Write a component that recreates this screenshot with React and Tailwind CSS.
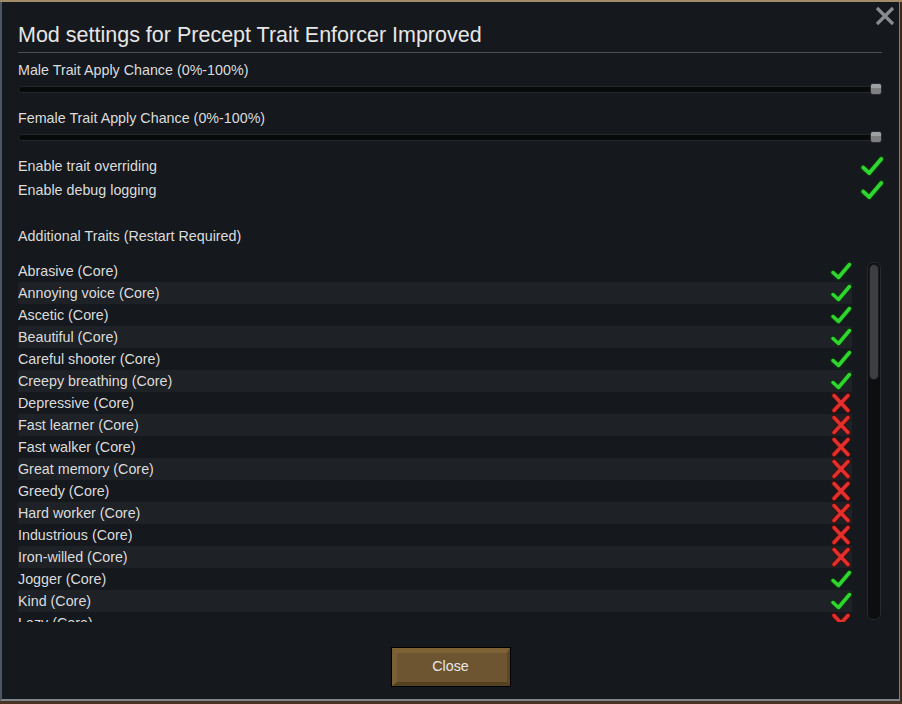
const traits = [
  ["Abrasive (Core)", true],
  ["Annoying voice (Core)", true],
  ["Ascetic (Core)", true],
  ["Beautiful (Core)", true],
  ["Careful shooter (Core)", true],
  ["Creepy breathing (Core)", true],
  ["Depressive (Core)", false],
  ["Fast learner (Core)", false],
  ["Fast walker (Core)", false],
  ["Great memory (Core)", false],
  ["Greedy (Core)", false],
  ["Hard worker (Core)", false],
  ["Industrious (Core)", false],
  ["Iron-willed (Core)", false],
  ["Jogger (Core)", true],
  ["Kind (Core)", true],
  ["Lazy (Core)", false],
];

function Check({ size = 22 }) {
  return (
    <svg width={size} height={size} viewBox="0 0 22 22">
      <path d="M3 12.5 L8.5 17.5 L19.5 4.5" fill="none" stroke="#0f3a0f" strokeWidth="5.5" strokeLinecap="round" strokeLinejoin="round" />
      <path d="M3 12.5 L8.5 17.5 L19.5 4.5" fill="none" stroke="#2fd62f" strokeWidth="3.5" strokeLinecap="round" strokeLinejoin="round" />
    </svg>
  );
}

function Cross({ size = 22 }) {
  return (
    <svg width={size} height={size} viewBox="0 0 22 22">
      <path d="M4 3.5 L18 18.5 M18 3.5 L4 18.5" fill="none" stroke="#4a0d0d" strokeWidth="5.5" strokeLinecap="round" />
      <path d="M4 3.5 L18 18.5 M18 3.5 L4 18.5" fill="none" stroke="#e2302c" strokeWidth="3.5" strokeLinecap="round" />
    </svg>
  );
}

function Slider() {
  return (
    <div className="mt-[3px] h-[12px] w-[864px] flex items-center relative">
      <div className="h-[7px] w-full rounded-full bg-[#08090b] border border-[#25282c]" />
      <div className="absolute right-0 top-0 h-[12px] w-[12px] rounded-[3px] bg-[#7e7f81] border border-[#2a2b2d] flex flex-col">
        <div className="h-[4px] bg-[#a0a1a3] rounded-t-[2px]" />
      </div>
    </div>
  );
}

export default function App() {
  return (
    <div
      className="w-[902px] h-[704px] bg-[#3b2a1c] flex flex-col text-[#dcdcdc]"
      style={{ fontFamily: '"Liberation Sans", Arial, sans-serif' }}
    >
      <div className="h-[2px] bg-[#a18c6a]" />
      <div className="h-[699px] w-[900px] bg-[#15181c] border-l-2 border-r border-b-2 border-l-[#4d5561] border-r-[#7b828a] border-b-[#7f858c] relative flex flex-col pl-[16px]">
        <div className="absolute right-[4px] top-[4px] w-[20px] h-[20px]">
          <svg width="20" height="20" viewBox="0 0 20 20">
            <path d="M2 2 L18 18 M18 2 L2 18" stroke="#8a8c8e" strokeWidth="3.2" />
          </svg>
        </div>

        <div className="mt-[19px] h-[28px] leading-[28px] text-[21.5px] text-[#e6e6e6]">
          Mod settings for Precept Trait Enforcer Improved
        </div>
        <div className="mt-[3px] h-px w-[864px] bg-[#4c4e51]" />

        <div className="mt-[7px] h-[20px] leading-[20px] text-[14.3px]">Male Trait Apply Chance (0%-100%)</div>
        <Slider />

        <div className="mt-[13px] h-[20px] leading-[20px] text-[14.3px]">Female Trait Apply Chance (0%-100%)</div>
        <Slider />

        <div className="mt-[11px] w-[866px] flex flex-col">
          {["Enable trait overriding", "Enable debug logging"].map((t) => (
            <div key={t} className="h-[24px] flex items-center justify-between text-[14.3px]">
              <span className="pt-px">{t}</span>
              <Check size={24} />
            </div>
          ))}
        </div>

        <div className="mt-[24px] h-[20px] leading-[20px] text-[14.3px]">Additional Traits (Restart Required)</div>

        <div className="mt-[14px] h-[362px] flex">
          <div className="w-[834px] h-full overflow-hidden flex flex-col">
            {traits.map(([name, on], i) => (
              <div
                key={name}
                className={`h-[22px] shrink-0 flex items-center justify-between text-[14.3px] ${i % 2 === 1 ? "bg-[#1e2126]" : ""}`}
              >
                <span className="pt-[2px]">{name}</span>
                {on ? <Check /> : <Cross />}
              </div>
            ))}
          </div>
          <div className="ml-[15px] mt-[2px] w-[14px] h-[358px] rounded-[6px] bg-[#0d0e10] border border-[#272a2e] p-px">
            <div className="h-[116px] rounded-[5px] bg-[#3c3e42] border border-[#1a1b1d]" />
          </div>
        </div>

        <div className="mt-[25px] flex justify-center pr-[16px]">
          <button className="w-[120px] h-[40px] border border-black bg-[#6c5530] text-[14.3px] text-[#e8e8e8] relative">
            <div className="absolute inset-0 border-t-[5px] border-l-[5px] border-r-[3px] border-b-[4px] border-t-[#7d6236] border-l-[#7a6034] border-r-[#5b4628] border-b-[#54411f]" />
            <span className="relative">Close</span>
          </button>
        </div>
      </div>
      <div className="h-[3px] bg-[#4a3322]" />
    </div>
  );
}
